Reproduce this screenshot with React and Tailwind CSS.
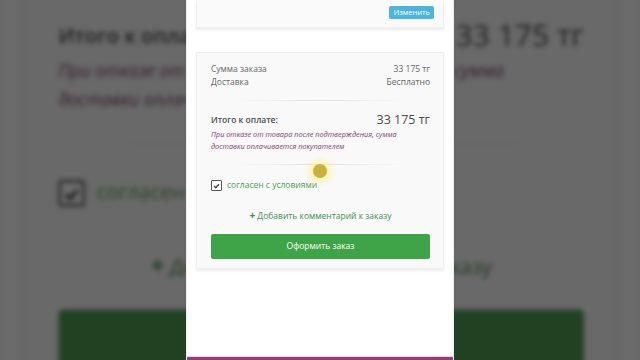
import React from "react";

function Screen({ cursor = false }) {
  return (
    <div className="relative w-[268px] h-[360px] bg-white flex flex-col font-['Open_Sans',sans-serif] border-l border-r border-[#ececec]">
      <div className="mx-[9px] h-[28px] bg-[#fafafa] border-b border-l border-r border-[#efefef] shadow-[0_2px_3px_rgba(0,0,0,0.08)] flex justify-end items-start pt-[6px] pr-[9px]">
        <div className="h-[13px] px-[4px] bg-[#4db4df] text-white text-[7.5px] leading-[13px] rounded-[2px]">Изменить</div>
      </div>
      <div className="mx-[9px] mt-[24px] h-[217px] bg-[#f9f9f9] border border-[#efefef] shadow-[0_2px_3px_rgba(0,0,0,0.08)] pl-[14px] pr-[13px] pt-[9px] flex flex-col">
        <div className="flex justify-between text-[8.5px] leading-[13px] text-[#666]">
          <span>Сумма заказа</span>
          <span>33 175 тг</span>
        </div>
        <div className="flex justify-between text-[8.5px] leading-[13px] text-[#666]">
          <span>Доставка</span>
          <span>Бесплатно</span>
        </div>
        <div className="mt-[12px] mx-[24px] h-px bg-gradient-to-r from-transparent via-[#e2e2e2] to-transparent" />
        <div className="mt-[11px] h-[16px] flex justify-between items-center text-[#4a4a4a]">
          <span className="text-[8.5px] font-semibold">Итого к оплате:</span>
          <span className="text-[12.5px]">33 175 тг</span>
        </div>
        <div className="text-[7.3px] leading-[12px] italic text-[#84406e]">
          <div>При отказе от товара после подтверждения, сумма</div>
          <div>доставки оплачивается покупателем</div>
        </div>
        <div className="mt-[12px] mx-[22px] h-px bg-gradient-to-r from-transparent via-[#e2e2e2] to-transparent" />
        <div className="mt-[15px] h-[11px] flex items-center gap-[5px]">
          <div className="w-[11px] h-[11px] border-[1.5px] border-[#555] rounded-[1px] bg-white flex items-center justify-center">
            <svg width="7" height="6" viewBox="0 0 7 6">
              <path d="M1 3 L2.8 4.8 L6 1.2" fill="none" stroke="#444" strokeWidth="1.4" />
            </svg>
          </div>
          <span className="text-[8.5px] text-[#4f9c5e]">согласен с условиями</span>
        </div>
        <div className="mt-[18px] text-center text-[8.5px] leading-[12px] text-[#3f9050]">
          <span className="font-bold text-[10px]">+</span> Добавить комментарий к заказу
        </div>
        <div className="mt-[12px] h-[25px] bg-[#3ea447] rounded-[2px] flex items-center justify-center text-white text-[8.5px]">
          Оформить заказ
        </div>
      </div>
      <div className="flex-1" />
      <div className="h-px bg-[#f3cce6]" />
      <div className="h-[3px] bg-[#8e3f78]" />
      {cursor && (
        <div className="absolute left-[126px] top-[164px] w-[14px] h-[14px] rounded-full bg-[#c8b23e] shadow-[0_0_6px_4px_rgba(255,238,110,0.55)]" />
      )}
    </div>
  );
}

export default function App() {
  return (
    <div className="relative w-[640px] h-[360px] overflow-hidden bg-[#6b6b6b]">
      <div aria-hidden="true" className="absolute left-[186px] top-0 scale-[2.4] origin-center brightness-[0.42] saturate-[0.8] blur-[1.2px]">
        <Screen />
      </div>
      <div className="relative flex justify-center">
        <Screen cursor />
      </div>
    </div>
  );
}
